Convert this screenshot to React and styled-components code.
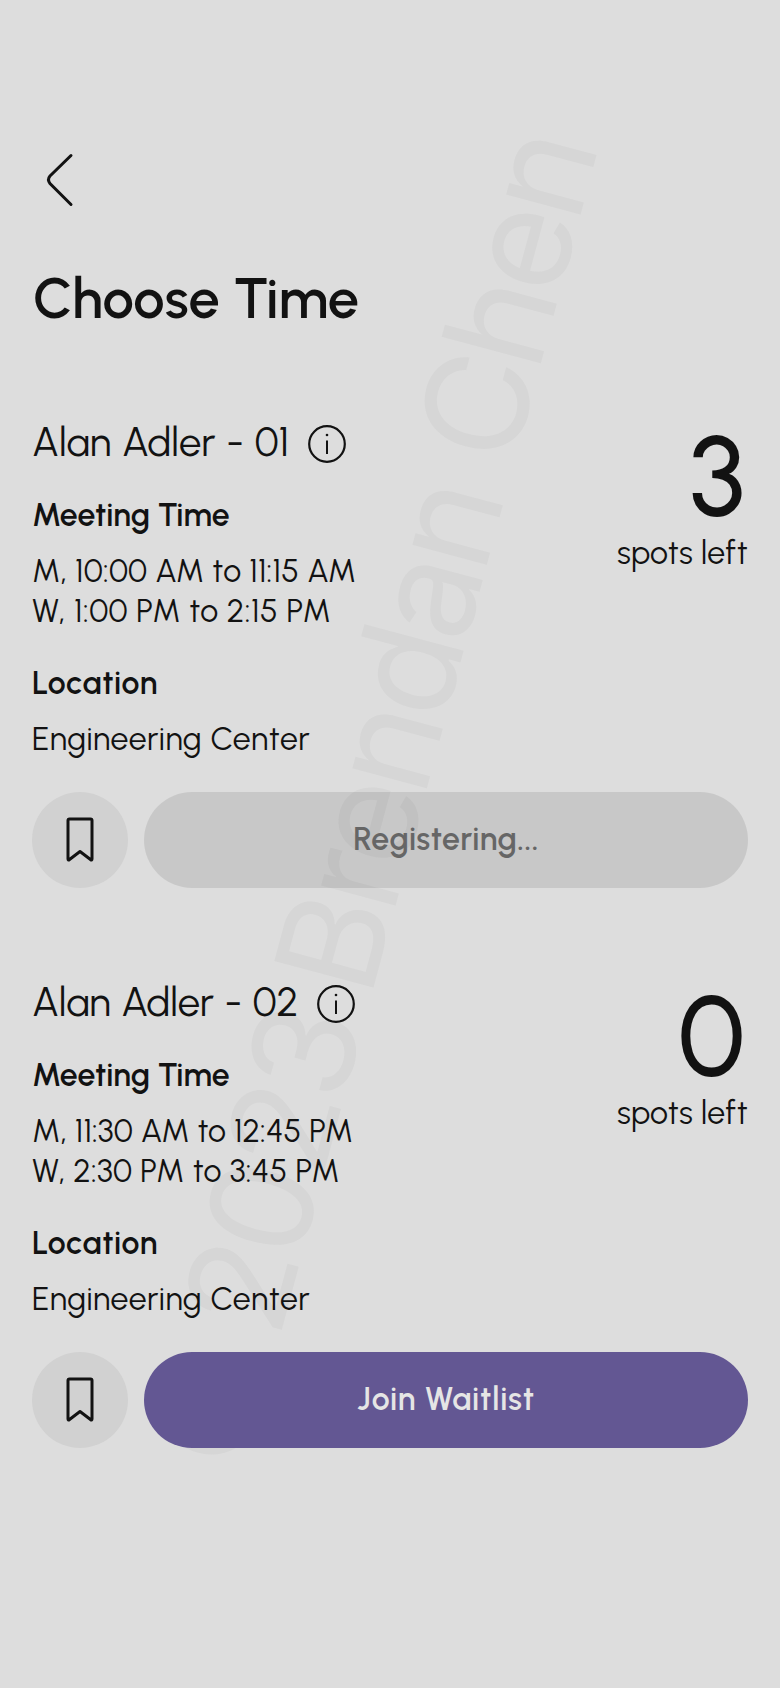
import React from "react";
import styled, { createGlobalStyle } from "styled-components";

const ink = "#121212";

const GlobalStyle = createGlobalStyle`
  * { box-sizing: border-box; }
  body { margin: 0; background: #dddddd; }
`;

const Screen = styled.main`
  position: relative;
  isolation: isolate;
  width: 780px;
  height: 1688px;
  padding: 148px 32px 0;
  overflow: hidden;
  background: #dddddd;
  color: ${ink};
  font-family: Urbanist, Outfit, Lato, sans-serif;
  font-size: 32px;
  line-height: 40px;
  font-weight: 400;
`;

const Watermark = styled.div`
  position: absolute;
  z-index: -1;
  top: 0;
  left: 0;
  transform-origin: 0 0;
  transform: translate(127px, 1436px) rotate(-75deg);
  font: 400 141px/142px Inter, "Liberation Sans", sans-serif;
  letter-spacing: -5.8px;
  white-space: nowrap;
  color: #d6d6d6;
`;

const CopyrightSign = styled.span`
  font-family: "Liberation Sans", sans-serif;
`;

const Year = styled.span`
  margin-right: -6px;
  letter-spacing: -5.8px;
`;

const BackButton = styled.button`
  display: block;
  width: 64px;
  height: 64px;
  padding: 0;
  border: 0;
  background: none;
  color: inherit;
`;

const Title = styled.h1`
  margin: 53px 0 85px 1px;
  font-size: 56px;
  line-height: 68px;
  font-weight: 600;
  letter-spacing: 0.1px;
`;

const Sections = styled.div`
  display: flex;
  flex-direction: column;
  gap: 90px;
`;

const Summary = styled.div`
  display: flex;
  justify-content: space-between;
  align-items: flex-start;
`;

const NameRow = styled.div`
  display: flex;
  align-items: center;
  height: 48px;
  gap: 18.5px;
  margin-bottom: 29px;
`;

const Name = styled.h2`
  margin: 0;
  font-size: 40px;
  line-height: 48px;
  font-weight: 400;
  letter-spacing: ${(p) => p.$tracking}px;
  word-spacing: 1px;
`;

const Label = styled.h3`
  margin: 0 0 16px;
  font-size: 32px;
  line-height: 40px;
  font-weight: 600;
  letter-spacing: ${(p) => p.$tracking}px;
`;

const Line = styled.div`
  white-space: nowrap;
  letter-spacing: ${(p) => p.$tracking}px;
`;

const Times = styled.div`
  margin-bottom: 32px;
`;

const Spots = styled.div`
  padding-top: 2px;
  text-align: right;
`;

const Count = styled.div`
  margin: 0 3px 1px 0;
  font-size: 112px;
  line-height: 112px;
  font-weight: 500;
`;

const Actions = styled.div`
  display: flex;
  gap: 16px;
  margin-top: 33px;
`;

const SaveButton = styled.button`
  display: grid;
  place-items: center;
  width: 96px;
  height: 96px;
  padding: 0;
  border: 0;
  border-radius: 50%;
  background: #d1d1d1;
  color: inherit;
`;

const ActionButton = styled.button`
  flex: 1;
  height: 96px;
  padding: 0 0 3px;
  border: 0;
  border-radius: 48px;
  font: inherit;
  font-weight: 600;
  letter-spacing: ${(p) => p.$tracking}px;
  background: ${(p) => (p.$pending ? "rgba(0, 0, 0, 0.095)" : "#635793")};
  color: ${(p) => (p.$pending ? "#666666" : "#e5e5e5")};
`;

const InfoSvg = styled.svg`
  flex: none;
  margin-top: 3px;
`;

const sections = [
  {
    name: "Alan Adler - 01",
    nameTracking: 0.1,
    times: [["M, 10:00 AM to 11:15 AM", 0.23], ["W, 1:00 PM to 2:15 PM", 0.5]],
    spots: 3,
    action: "Registering...",
    actionTracking: 0.47,
    pending: true,
  },
  {
    name: "Alan Adler - 02",
    nameTracking: -0.05,
    times: [["M, 11:30 AM to 12:45 PM", 0.12], ["W, 2:30 PM to 3:45 PM", 0.28]],
    spots: 0,
    action: "Join Waitlist",
    actionTracking: 0.85,
    pending: false,
  },
];

const BackIcon = () => (
  <svg width="64" height="64" viewBox="0 0 64 64" fill="none" stroke="currentColor" strokeWidth="3" strokeLinecap="round">
    <path d="M39 7.5 L18 28 Q15 31.5 18 35.5 L39 56.5" />
  </svg>
);

const InfoIcon = () => (
  <InfoSvg width="38" height="38" viewBox="0 0 38 38" fill="none" stroke="currentColor" strokeWidth="2.2">
    <circle cx="19" cy="19" r="17.8" />
    <path d="M19 15.5v13.5" strokeWidth="2" />
    <circle cx="19" cy="10" r="1.3" fill="currentColor" stroke="none" />
  </InfoSvg>
);

const BookmarkIcon = () => (
  <svg width="28" height="46" viewBox="0 0 28 46" fill="none" stroke="currentColor" strokeWidth="3" strokeLinejoin="round">
    <path d="M3.5 2h21a1.5 1.5 0 0 1 1.5 1.5V42q0 1.8-1.5 .5L14 34.5 3.5 42.5Q2 43.8 2 42V3.5a1.5 1.5 0 0 1 1.5-1.5Z" />
  </svg>
);

function CourseSection({ section }) {
  return (
    <section>
      <Summary>
        <div>
          <NameRow>
            <Name $tracking={section.nameTracking}>{section.name}</Name>
            <InfoIcon />
          </NameRow>
          <Label $tracking={0.05}>Meeting Time</Label>
          <Times>
            {section.times.map(([text, tracking]) => (
              <Line key={text} $tracking={tracking}>{text}</Line>
            ))}
          </Times>
          <Label $tracking={0.65}>Location</Label>
          <Line $tracking={0.6}>Engineering Center</Line>
        </div>
        <Spots>
          <Count>{section.spots}</Count>
          <Line $tracking={0.25}>spots left</Line>
        </Spots>
      </Summary>
      <Actions>
        <SaveButton aria-label="Save"><BookmarkIcon /></SaveButton>
        <ActionButton $pending={section.pending} $tracking={section.actionTracking}>
          {section.action}
        </ActionButton>
      </Actions>
    </section>
  );
}

export default function App() {
  return (
    <Screen>
      <GlobalStyle />
      <Watermark>
        <CopyrightSign>©</CopyrightSign> <Year>2023</Year> Brendan Chen
      </Watermark>
      <BackButton aria-label="Back"><BackIcon /></BackButton>
      <Title>Choose Time</Title>
      <Sections>
        {sections.map((section) => (
          <CourseSection key={section.name} section={section} />
        ))}
      </Sections>
    </Screen>
  );
}
